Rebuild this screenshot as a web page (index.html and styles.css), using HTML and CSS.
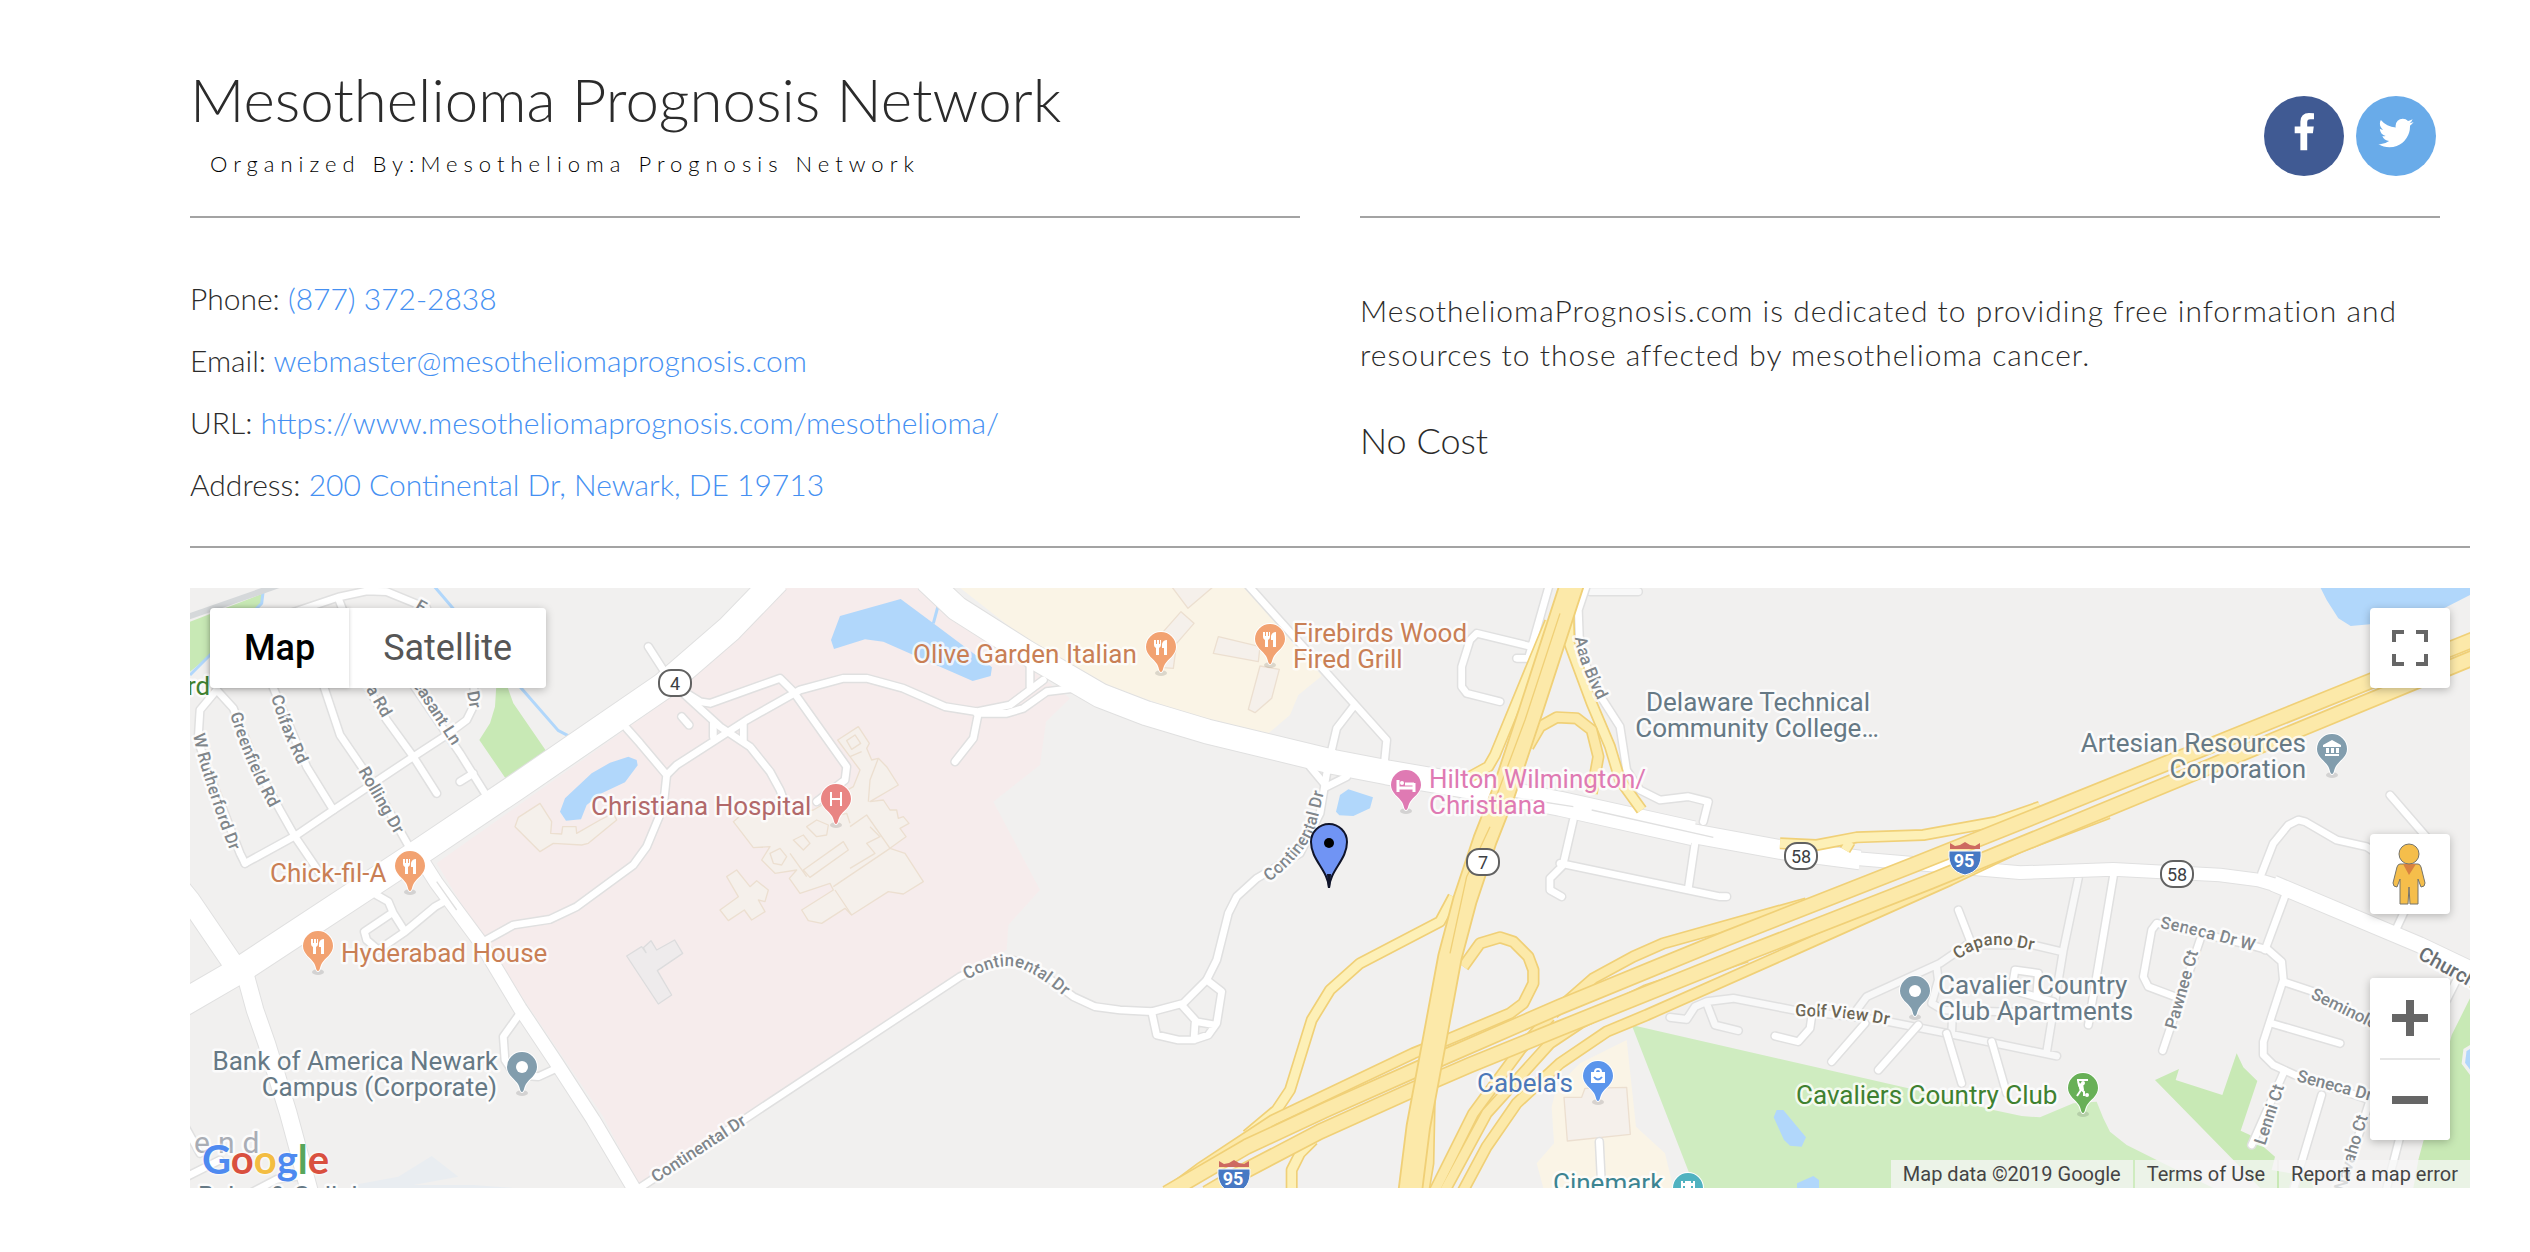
FILE: index.html
```html
<!DOCTYPE html>
<html lang="en">
<head>
<meta charset="utf-8">
<meta name="viewport" content="width=device-width, initial-scale=1">
<title>Mesothelioma Prognosis Network</title>
<link rel="stylesheet" href="styles.css">
</head>
<body>
<main class="page">
  <div class="columns">
    <header class="heading">
      <h1 class="title">Mesothelioma Prognosis Network</h1>
      <p class="organizer">Organized By:Mesothelioma Prognosis Network</p>
    </header>
    <nav class="social" aria-label="Social links">
      <a class="social-link facebook" href="#" aria-label="Facebook"><svg viewBox="0 0 1792 1792"><path d="M1343 12v264h-157q-86 0-116 36t-30 108v189h293l-39 296h-254v759h-306v-759h-255v-296h255v-218q0-186 104-288.5t277-102.5q147 0 228 12z"/></svg></a>
      <a class="social-link twitter" href="#" aria-label="Twitter"><svg viewBox="0 0 1792 1792"><path d="M1684 408q-67 98-162 167 1 14 1 42 0 130-38 259.5t-115.5 248.5-184.5 210.5-258 146-323 54.5q-271 0-496-145 35 4 78 4 225 0 401-138-105-2-188-64.5t-114-159.5q33 5 61 5 43 0 85-11-112-23-185.5-111.5t-73.5-205.5v-4q68 38 146 41-66-44-105-115t-39-154q0-88 44-163 121 149 294.5 238.5t371.5 99.5q-8-38-8-74 0-134 94.5-228.5t228.5-94.5q140 0 236 102 109-21 205-78-37 115-142 178 93-10 186-50z"/></svg></a>
    </nav>
    <ul class="contact">
      <li>Phone: <a href="tel:8773722838">(877) 372-2838</a></li>
      <li>Email: <a href="mailto:webmaster@mesotheliomaprognosis.com">webmaster@mesotheliomaprognosis.com</a></li>
      <li>URL: <a href="https://www.mesotheliomaprognosis.com/mesothelioma/">https://www.mesotheliomaprognosis.com/mesothelioma/</a></li>
      <li>Address: <a href="#map">200 Continental Dr, Newark, DE 19713</a></li>
    </ul>
    <section class="about">
      <p class="description">MesotheliomaPrognosis.com is dedicated to providing free information and resources to those affected by mesothelioma cancer.</p>
      <p class="cost">No Cost</p>
    </section>
  </div>
  <hr class="rule">
  <section class="map" id="map" aria-label="Map">
    <svg class="map-canvas" viewBox="190 588 2280 600">
      <defs>
        <g id="pin"><ellipse cx="0" cy="26" rx="6" ry="3" fill="#000" fill-opacity=".12"/><path d="M0 25C-2 25-2 20-4 17-7 12-15 8-15 0A15 15 0 0 1 15 0C15 8 7 12 4 17 2 20 2 25 0 25Z" stroke="#fff" stroke-width="2" paint-order="stroke"/></g>
        <g id="food"><use href="#pin"/><path fill="#fff" d="M-7-7h2v4h1v-4h2v4h1v-4h1v5q0 2-2 3v7h-3v-7q-2-1-2-3zM6-7v15H3V1H1v-4q1-4 5-4z"/></g>
        <g id="interstate"><path fill="#cd6a60" d="M-15-16l5 3 5-1 5-3 5 3 5 1 5-3v6h-30z"/><path fill="#4779c4" stroke="#fff" stroke-width="1" d="M-16-8h32c1 14-4 21-16 24C-12 13-17 6-16-8Z"/></g>
        <rect id="oval" x="-16" y="-13" width="32" height="26" rx="12" fill="#fff" stroke="#616161" stroke-width="2"/>

        <g id="streets">
          <path d="M195 850L350 765 460 690 700 530 800 465 860 420 885 370 880 300"/>
          <path d="M110 330L60 390 55 470 60 500 110 640 180 820 195 850"/>
          <path d="M110 330L160 385 230 560 300 690 345 770 420 880"/>
          <path d="M270 300L380 560 460 690M425 300L480 465 545 560 620 680 670 770 710 840M550 300L620 420 700 530 770 640"/>
          <path d="M690 300L840 520 915 640M840 605L880 580M330 100L480 50 560 33 620 35 740 84M475 55L500 120"/>
          <path d="M1405 200L1450 270M1340 445L1380 490 1460 585 1450 680 1400 800 1360 855 1190 980 1110 1018 1000 1035 910 1085"/>
          <path d="M1460 585L1490 555 1700 420 1860 330 1990 295 2060 295 2170 325 2295 380 2390 395 2490 375 2590 300"/>
          <path d="M2390 400L2480 400 2530 385 2600 335 2680 325M2395 400L2380 475 2325 545M2550 240V320"/>
          <path d="M1520 340L1560 365 1590 370 1800 295 1840 335 2000 560 1995 600 1910 665M1600 430L1600 470M1690 430L1690 480"/>
          <path d="M1510 340L1620 440 1710 500 1770 575 1800 630 1815 670M1505 410L1527 435"/>
          <path d="M3190 0L3620 480 3612 560M3520 380L3470 445 3450 530M3390 560L3440 620M3500 590L3440 620"/>
          <path d="M3440 580L3420 700 3360 820 3230 895 3170 950 3145 1000 3110 1140 3080 1200 3010 1270 2915 1295 2820 1290 2745 1280 2680 1250 2600 1190 2500 1140 2440 1145 2340 1190 1705 1610 1360 1836"/>
          <path d="M3080 1200L3125 1235 3110 1330 3085 1365 3040 1380 2995 1380 2930 1365 2915 1295M3005 1275L3050 1325 3105 1335M3045 1330L3042 1380"/>
          <path d="M4112 0L4045 235 4010 235M4055 200L3890 160 3870 180 3845 260 3845 320 3860 340 3960 365"/>
          <path d="M4225 0L4195 90 4198 170 4230 300 4320 440 4340 570 4380 630 4440 660 4525 650 4585 665 4570 725"/>
          <path d="M4180 720L4150 850M4140 850L4620 950 4640 950M4150 855L4110 895 4110 930 4145 950M4545 790L4525 925"/>
          <path d="M590 945L625 965 640 1000 675 1055 765 980 810 955M635 1000L553 1055 560 1080 595 1110 675 1055"/>
          <path d="M1020 1300L970 1370 975 1440 1005 1485 1075 1490 1130 1465M10 1630L60 1720M0 1800L120 1740M210 1840L290 1798 380 1785"/>
          <path d="M6245 880L6280 790 6325 735 6355 720 6375 725 6470 780 6560 800 6620 840M6630 645L6760 795M5800 890L5725 1335M6320 935L6255 1110"/>
          <path d="M5985 1250L5905 1220 5890 1190 5915 1050 5930 1030 6210 1095 6265 1110 6305 1145 6310 1200 6250 1385 6250 1425 6280 1455 6345 1485 6570 1560"/>
          <path d="M6060 1080L5948 1412M6310 1205L6400 1235 6600 1350M6275 1330L6480 1390M6310 1480L6215 1695M6425 1545L6340 1830M6570 1560L6480 1840M6680 980L6645 1055M6665 1650L6620 1824M6835 1190L6800 1260"/>
          <path d="M5335 990L5370 1080M4785 1368L4855 1385 4890 1345 4895 1310M5055 1330L4955 1445M5215 1335L5095 1470M5300 1360L5345 1510M5435 1385L5480 1540M4258 1685L4265 1824"/>
          <path d="M5570 1250L5575 1180 5505 1170 5495 1230 5620 1265"/>
        </g>
        <g id="lanes">
          <path d="M4470 1312L4520 1318 4545 1280 4580 1265 4660 1255 4840 1290 5100 1320 5300 1360 5630 1428M4580 1270L4605 1335 4675 1352M5030 1290L5060 1250 5280 1150 5360 1095 5560 1095 5645 1115M5270 1160L5275 1200 5255 1270 5290 1290 5600 1300M5315 1360L5318 1290M5695 895L5650 1110 5600 1415M4230 35H4375"/>
        </g>
        <g id="avenues">
          <path stroke-width="78" d="M-20 1286L180 1170 720 815 1010 620 1450 318 1650 145 1790 0"/>
          <path stroke-width="60" d="M0 925L30 962 175 1175"/>
          <path stroke-width="50" d="M195 1180L225 1290 260 1390 325 1600 390 1840"/>
          <path stroke-width="40" d="M700 800L770 910 900 1085 1020 1285 1130 1450 1240 1620 1370 1840"/>
          <path stroke-width="72" d="M2240 0L2330 85 2540 218 2760 346 2900 400 3080 454 3460 546 3620 577 3860 618 4140 671 4540 760"/>
          <path stroke-width="56" d="M4480 750L4810 810 5040 840"/>
          <path stroke-width="38" d="M4960 830L5200 850 5520 878 5800 868 6120 885 6235 900 6330 928"/>
          <path stroke-width="46" d="M6280 910L6720 1095 6920 1190"/>
        </g>
      </defs>
      <rect class="land" x="190" y="588" width="2280" height="600"/>
      <g transform="translate(180 580) scale(.333333)">
        <path fill="#f6ecec" d="M770 850L1440 375 1815 0 2215 24 2670 355 2598 425 2580 555 2440 665 2580 930 2485 1035 2480 1110 2340 1190 1380 1824 1270 1610 910 1080Z"/>
        <path fill="#faf4e6" d="M2310 0L2540 180 2760 310 3080 420 3265 460 3330 405 3355 345 3425 288 3200 0ZM4340 1380L4368 1640 4455 1720 4480 1824H4090L4070 1750 4122 1690 4115 1580 4130 1520 4200 1450Z"/>
        <path fill="#c8e9b5" d="M30 125L250 40 245 75 85 230 30 275ZM950 300H975L1000 370 1100 515 980 600 898 480 930 430 945 380ZM5925 1500L5997 1467 5987 1500 6127 1545 6170 1420 6190 1462 6232 1503 6182 1652 6210 1665 6285 1730 6275 1770 6390 1790 6400 1824H6240L6160 1740ZM6870 1255L6815 1365 6715 1740 6700 1824H6870Z"/>
        <path fill="#cfecc0" d="M4355 1335L5185 1525 5440 1590 5525 1608 5580 1612 5680 1570 5750 1565 5770 1615 5790 1655 5840 1695 5930 1740 6100 1824H4545Z"/>
        <path fill="#e9edf1" d="M1000 1824L880 1815 700 1815 835 1790 755 1728 655 1790 520 1815V1824Z"/>
        <path fill="#b1d7fb" d="M1980 108L2162 57 2260 130 2436 262 2432 288 2378 303 2275 258 2110 185 2055 178 1962 207 1953 180ZM1140 695L1155 655 1235 580 1290 548 1345 530 1370 540 1373 556 1335 607 1265 640 1220 675 1203 718 1158 722ZM3468 695L3480 645 3505 628 3579 652 3570 685 3520 708 3478 706ZM6422 24L6440 60 6475 115 6512 138 6570 133 6795 83 6870 45V24ZM4790 1590H4810L4878 1672 4865 1700 4830 1697 4812 1680 4781 1612ZM4851 1810L4900 1788 4917 1800V1824H4851Z"/>
        <path fill="#b1d7fb" stroke="#f1f1f0" stroke-width="10" d="M6880 1395L6855 1410 6850 1450 6880 1490Z"/>
        <g fill="none" stroke="#b1d7fb" stroke-width="9"><path d="M755 10L1020 320 1135 452 1170 470M250 30L245 70 90 225 30 285M2275 75L2260 130"/></g>
        <path d="M20 112L300 14" stroke="#d5d8da" stroke-width="18"/>
        <g fill="#f5f0eb" stroke="#ecdfd0" stroke-width="4" stroke-linejoin="round">
          <path d="M1015 712L1080 670 1115 725 1112 760 1145 762 1148 740 1188 740 1190 760 1260 720 1300 700 1310 720 1225 790 1205 795 1120 790 1080 815 1005 740Z"/>
          <path d="M1973 480L2035 440 2068 490 2060 505 2075 540 2095 535 2120 560 2155 615 2070 665 2110 660 2130 690 2150 690 2155 715 2170 710 2187 730 2160 745 2178 770 2130 805 2175 820 2230 905 2170 942 2125 935 2015 1005 1995 985 1925 1030 1885 1022 1865 990 1960 930 1950 910 1860 940 1828 895 1850 870 1785 880 1745 840 1770 800 1720 803 1660 725 1690 700 1800 705 1900 690 2020 620 2040 570 2010 530Z"/>
          <path fill="none" d="M2000 482L2025 465 2042 490 2015 508ZM1870 870L1990 785 2005 810 1890 892ZM1830 820L1880 890M2010 740L2060 705 2130 805 1960 920M2070 740L2100 770 2060 790 2085 820 2010 865M1880 740L1910 720 1945 735 1940 765 1910 770ZM1840 780L1870 765 1890 790 1870 810ZM1770 820L1800 805 1820 830 1805 855 1780 850ZM1960 710L2000 700 2010 730M2065 665L2070 600 2095 535M1965 930L2015 1005M2010 530L2045 515"/>
          <path d="M1640 890L1670 870 1710 920 1730 902 1765 930 1755 965 1735 960 1755 995 1715 1020 1693 990 1645 1022 1620 990 1675 950Z"/>
          <path d="M2960 0L3024 85 3100 20ZM2950 155L3003 95 3042 130 2990 190ZM2975 180L2990 190 2980 265 2940 262ZM3115 170L3240 200 3235 245 3100 220ZM3240 258L3298 268 3275 355 3225 398 3205 388ZM4152 1552L4205 1552 4215 1525 4340 1522 4351 1663 4162 1683Z"/>
          <path fill="#eeebec" stroke="#dcdcdd" d="M1340 1128L1385 1100 1398 1118 1390 1103 1413 1082 1430 1110 1484 1080 1508 1120 1432 1172 1475 1245 1435 1272Z"/>
        </g>
        <use class="street-case" href="#lanes"/><use class="lane-fill" href="#lanes"/>
        <use class="street-case" href="#streets"/>
        <g class="avenue-case">
          <path stroke-width="84" d="M-20 1286L180 1170 720 815 1010 620 1450 318 1650 145 1790 0"/>
          <path stroke-width="66" d="M0 925L30 962 175 1175"/>
          <path stroke-width="56" d="M195 1180L225 1290 260 1390 325 1600 390 1840"/>
          <path stroke-width="46" d="M700 800L770 910 900 1085 1020 1285 1130 1450 1240 1620 1370 1840"/>
          <path stroke-width="78" d="M2240 0L2330 85 2540 218 2760 346 2900 400 3080 454 3460 546 3620 577 3860 618 4140 671 4540 760"/>
          <path stroke-width="62" d="M4480 750L4810 810 5040 840"/>
          <path stroke-width="44" d="M4960 830L5200 850 5520 878 5800 868 6120 885 6235 900 6330 928"/>
          <path stroke-width="52" d="M6280 910L6720 1095 6920 1190"/>
        </g>
        <use class="street-fill" href="#streets"/>
        <use class="avenue-fill" href="#avenues"/>
        <path d="M4000 652L4180 680M4235 690L4600 772M770 905L830 990" fill="none" stroke="#e0e0e0" stroke-width="4"/>
        <g class="ramp-case" stroke-width="36">
          <path d="M4110 125L3945 525 3925 560 3870 590"/><path d="M4165 60L4168 190 4235 370 4290 500 4320 600 4385 690"/><path d="M5580 680L5450 725 5230 765 5030 772 4910 795 4800 790M5010 785L4995 810"/><path d="M3820 950L3780 1025 3540 1150 3450 1230 3395 1320 3330 1530 3290 1590 3200 1665"/><path d="M3400 1680L3360 1720 3335 1770 3335 1840"/>
        </g>
        <g class="ramp-fill" stroke-width="26">
          <path d="M4110 125L3945 525 3925 560 3870 590"/><path d="M4165 60L4168 190 4235 370 4290 500 4320 600 4385 690"/><path d="M5580 680L5450 725 5230 765 5030 772 4910 795 4800 790M5010 785L4995 810"/><path d="M3820 950L3780 1025 3540 1150 3450 1230 3395 1320 3330 1530 3290 1590 3200 1665"/><path d="M3400 1680L3360 1720 3335 1770 3335 1840"/>
        </g>
        <g class="ramp-case" stroke-width="37">
          <path d="M4045 500L4080 440 4130 412 4190 415 4235 450 4255 530 4235 640"/><path d="M3850 1160L3900 1090 3960 1072 4000 1085 4045 1130 4060 1170 4060 1210 4030 1270 3990 1300 3800 1380 3700 1420 3280 1620 3060 1765 2960 1840"/><path d="M4880 970L4450 1090 4360 1130 4240 1195 4120 1300"/><path d="M4110 1310L4020 1410 3880 1600 3760 1840"/><path d="M4700 1130L4400 1230 4200 1330 4110 1390 3920 1600 3790 1840"/><path d="M3750 1500L3745 1750 3730 1840"/><path d="M5785 700L5520 800 5310 900 4840 1110 4400 1305 4280 1355 4140 1450 4010 1570 3920 1700 3845 1840"/>
        </g>
        <g class="highway-fill" stroke-width="27">
          <path d="M4045 500L4080 440 4130 412 4190 415 4235 450 4255 530 4235 640"/><path d="M3850 1160L3900 1090 3960 1072 4000 1085 4045 1130 4060 1170 4060 1210 4030 1270 3990 1300 3800 1380 3700 1420 3280 1620 3060 1765 2960 1840"/><path d="M4880 970L4450 1090 4360 1130 4240 1195 4120 1300"/><path d="M4110 1310L4020 1410 3880 1600 3760 1840"/><path d="M4700 1130L4400 1230 4200 1330 4110 1390 3920 1600 3790 1840"/><path d="M3750 1500L3745 1750 3730 1840"/><path d="M5785 700L5520 800 5310 900 4840 1110 4400 1305 4280 1355 4140 1450 4010 1570 3920 1700 3845 1840"/>
        </g>
        <path class="ramp-case" stroke-width="50" d="M6900 225L5580 770 5250 905 4700 1120 4140 1345 3870 1455 3720 1520 3420 1655 3200 1770 3080 1840"/>
        <path class="highway-fill" stroke-width="40" d="M6900 225L5580 770 5250 905 4700 1120 4140 1345 3870 1455 3720 1520 3420 1655 3200 1770 3080 1840"/>
        <path class="ramp-case" stroke-width="50" d="M6900 171L5580 703 5200 855 4640 1075 4140 1280 3800 1428 3440 1588 3200 1700 2960 1840"/>
        <path class="highway-fill" stroke-width="40" d="M6900 171L5580 703 5200 855 4640 1075 4140 1280 3800 1428 3440 1588 3200 1700 2960 1840"/>
        <path class="ramp-case" stroke-width="76" d="M4180 0L4050 400 3970 640 3915 780 3855 960 3810 1130 3760 1400 3715 1640 3690 1840"/>
        <path class="highway-fill" stroke-width="65" d="M4180 0L4050 400 3970 640 3915 780 3855 960 3810 1130 3760 1400 3715 1640 3690 1840"/>
        <path d="M4140 100L4035 420 3945 660M3930 740L3860 890 3810 1120" class="ramp-case" stroke-width="4"/>
      </g>

      <g class="street-label">
        <path id="s1" fill="none" d="M193 735Q202 780 236 866"/><text><textPath href="#s1">W Rutherford Dr</textPath></text>
        <path id="s2" fill="none" d="M230 714Q246 768 280 826"/><text><textPath href="#s2">Greenfield Rd</textPath></text>
        <path id="s3" fill="none" d="M271 697Q282 735 308 784"/><text><textPath href="#s3">Colfax Rd</textPath></text>
        <text transform="translate(358 771) rotate(60)">Rolling Dr</text>
        <text transform="translate(361 681) rotate(60)">na Rd</text>
        <text transform="translate(412 684) rotate(57)">easant Ln</text>
        <text transform="translate(467 692) rotate(80)">Dr</text>
        <text transform="translate(414 609) rotate(30)">E</text>
        <text transform="translate(656 1183) rotate(-33)">Continental Dr</text>
        <path id="s4" fill="none" d="M967 980Q1003 958 1027 971 1045 979 1080 1010"/><text><textPath href="#s4">Continental Dr</textPath></text>
        <path id="s5" fill="none" d="M1269 882Q1307 853 1316 825 1322 800 1332 760"/><text><textPath href="#s5">Continental Dr</textPath></text>
        <path id="s6" fill="none" d="M1575 638Q1578 665 1607 718"/><text><textPath href="#s6">Aaa Blvd</textPath></text>
        <path id="s7" fill="none" d="M2160 928Q2195 934 2260 953"/><text><textPath href="#s7">Seneca Dr W</textPath></text>
        <text transform="translate(2176 1030) rotate(-74)">Pawnee Ct</text>
        <text transform="translate(2310 998) rotate(26)">Seminole Dr</text>
        <text transform="translate(2296 1081) rotate(15)">Seneca Dr</text>
        <text transform="translate(2265 1146) rotate(-72)">Lenni Ct</text>
        <text transform="translate(2345 1192) rotate(-73)">Navaho Ct</text>
        <g class="local">
          <path id="s8" fill="none" d="M1958 960Q1978 944 1998 945 2012 945 2050 954"/><text><textPath href="#s8">Capano Dr</textPath></text>
          <path id="s9" fill="none" d="M1795 1016L1830 1017Q1860 1019 1905 1028"/><text><textPath href="#s9">Golf View Dr</textPath></text>
        </g>
        <text class="wide" transform="translate(2417 958) rotate(29)">Church Rd</text>
      </g>

      <g class="place-label">
        <g class="food"><text x="270" y="882">Chick-fil-A</text><text x="913" y="663">Olive Garden Italian</text><text x="1293" y="642">Firebirds Wood</text><text x="1293" y="668">Fired Grill</text><text x="341" y="962">Hyderabad House</text></g>
        <text class="health" x="591" y="815">Christiana Hospital</text>
        <g class="lodging"><text x="1429" y="788">Hilton Wilmington/</text><text x="1429" y="814">Christiana</text></g>
        <g class="middle"><text x="1758" y="711">Delaware Technical</text><text x="1757" y="737">Community College…</text></g>
        <g class="end"><text x="2306" y="752">Artesian Resources</text><text x="2306" y="778">Corporation</text><text x="498" y="1070">Bank of America Newark</text><text x="497" y="1096">Campus (Corporate)</text></g>
        <text x="1938" y="994">Cavalier Country</text><text x="1938" y="1020">Club Apartments</text>
        <text class="shop" x="1477" y="1092">Cabela's</text>
        <text class="cinema" x="1553" y="1192">Cinemark</text>
        <text class="park" x="1796" y="1104">Cavaliers Country Club</text>
        <text class="park" x="187" y="695">rd</text>
        <text class="area" x="194" y="1153">end</text>
        <text x="198" y="1205">Baker &amp; Gallaher</text>
      </g>

      <g fill="#f2a271"><use href="#food" x="410" y="866"/><use href="#food" x="1161" y="647"/><use href="#food" x="1270" y="639"/><use href="#food" x="318" y="946"/></g>
      <g transform="translate(836 799)" fill="#e98583"><use href="#pin"/><path d="M-5-7V7M5-7V7M-5 0H5" stroke="#fff" stroke-width="2"/></g>
      <g transform="translate(1406 785)" fill="#df7ab3"><use href="#pin"/><path d="M-8-5V7M8-2V7M-8 3H8M-1-1H8" stroke="#fff" stroke-width="3"/><circle cx="-4" cy="-2" r="2" fill="#fff"/></g>
      <g transform="translate(2332 749)" fill="#829dad"><use href="#pin"/><path fill="#fff" d="M-9-4L0-9 9-4V-2H-9ZM-6-1h3v5h-3zM-1-1h3v5h-3zM4-1h3v5H4zM-7 5H7v2H-7z"/></g>
      <g fill="#829dad"><use href="#pin" x="522" y="1067"/><use href="#pin" x="1915" y="991"/></g>
      <circle cx="522" cy="1067" r="6" fill="#fff"/><circle cx="1915" cy="991" r="6" fill="#fff"/>
      <g transform="translate(1598 1076)" fill="#5b95ec"><use href="#pin"/><path fill="#fff" d="M-7-4H7V7H-7z"/><path d="M-3-4Q-3-7 0-7T3-4" fill="none" stroke="#fff" stroke-width="2"/><path d="M-4 1Q0 6 4 1" fill="none" stroke="#5b95ec" stroke-width="2"/></g>
      <g transform="translate(2083 1088)" fill="#68b057"><use href="#pin"/><path d="M-6-8H5M-5-7L-4-3 1-4M-4-3L-2 2-6 8M-2 1L1 4V8" fill="none" stroke="#fff" stroke-width="2"/><path fill="#fff" d="M-5-4L0-5 1 2-3 3Z"/><circle cx="0" cy="-5" r="2" fill="#fff"/><circle cx="4" cy="7" r="2" fill="#fff"/></g>
      <g transform="translate(1688 1188)" fill="#50b2c0"><use href="#pin"/><path fill="#fff" d="M-7-7h2v2h2v-2h6v2h2v-2h2V7H-7z"/><path d="M-5-2h2v3h-2zM3-2h2v3H3z"/></g>

      <g class="shield-label">
        <use href="#oval" x="675" y="683"/><text x="675" y="690">4</text>
        <use href="#oval" x="1483" y="862"/><text x="1483" y="869">7</text>
        <use href="#oval" x="1801" y="856"/><text x="1801" y="863">58</text>
        <use href="#oval" x="2177" y="874"/><text x="2177" y="881">58</text>
        <use href="#interstate" x="1965" y="859"/><text class="interstate" x="1964" y="867">95</text>
        <use href="#interstate" x="1234" y="1177"/><text class="interstate" x="1233" y="1185">95</text>
      </g>
      <path d="M1329 888C1328 870 1311 860 1311 842A18 18 0 0 1 1347 842C1347 860 1330 870 1329 888Z" fill="#7094f4" stroke="#10142a" stroke-width="2"/><path d="M1327 874H1331L1330 888H1328Z" fill="#10142a"/><circle cx="1329" cy="843" r="5" fill="#000"/>
    </svg>

    <div class="map-types">
      <button class="map-type active" type="button">Map</button><button class="map-type" type="button">Satellite</button>
    </div>
    <button class="control fullscreen" type="button" aria-label="Toggle fullscreen"><svg viewBox="0 0 80 80"><path d="M22 34V22H34V26H26V34ZM46 22H58V34H54V26H46ZM22 46H26V54H34V58H22ZM54 46H58V58H46V54H54Z"/></svg></button>
    <div class="control-stack">
      <button class="control" type="button" aria-label="Street View"><svg viewBox="0 0 80 80"><g fill="#f5be4b" stroke="#76746a" stroke-width="1"><path d="M30 30H48Q50 30 51 33L55 49Q55 53 51 53L48 45V70H40L39 53 38 70H30V45L27 53Q23 53 23 49L27 33Q28 30 30 30Z"/><path d="M33 30H46L39 41Z" fill="#d8813f" stroke="none"/><circle cx="39" cy="20" r="10"/></g></svg></button>
      <div class="zoom">
        <button class="zoom-button" type="button" aria-label="Zoom in"><svg viewBox="0 0 80 80"><path d="M36 22H44V36H58V44H44V58H36V44H22V36H36Z"/></svg></button>
        <button class="zoom-button" type="button" aria-label="Zoom out"><svg viewBox="0 0 80 80"><path d="M22 36H58V44H22Z"/></svg></button>
      </div>
    </div>
    <a class="google" href="#" aria-label="Google"><span class="blue">G</span><span class="red">o</span><span class="yellow">o</span><span class="blue">g</span><span class="green">l</span><span class="red">e</span></a>
    <footer class="credits"><span>Map data ©2019 Google</span><a href="#">Terms of Use</a><a href="#">Report a map error</a></footer>
  </section>
</main>
</body>
</html>
```
FILE: styles.css
```css
* { box-sizing: border-box; }
body { margin: 0; background: #fff; color: #2b2b2b; font-family: Lato, "Liberation Sans", sans-serif; font-weight: 300; }
h1, p, ul { margin: 0; padding: 0; }
a { color: #4590f2; text-decoration: none; }
button { border: 0; padding: 0; background: #fff; font-family: inherit; cursor: pointer; }

.page { padding: 63px 60px 64px 190px; }
.columns { display: grid; grid-template-columns: 37fr 36fr; column-gap: 60px; padding-right: 30px; }
.heading, .social { border-bottom: 2px solid #a3a3a3; }
.heading { padding-bottom: 39px; }
.title { font-size: 60px; line-height: 72px; font-weight: 300; }
.organizer { margin-top: 16px; padding-left: 20px; color: #000; font-size: 22px; line-height: 26px; letter-spacing: 6px; }

.social { display: flex; justify-content: flex-end; align-items: flex-end; gap: 12px; padding: 0 4px 40px 0; }
.social-link { display: flex; align-items: center; justify-content: center; width: 80px; height: 80px; padding-bottom: 6px; border-radius: 50%; }
.social-link svg { width: 40px; height: 40px; fill: #fff; }
.facebook { background: #405a93; }
.twitter { background: #69abe9; }

.contact { padding: 49px 0 31px; list-style: none; font-size: 30px; line-height: 62px; }
.about { padding-top: 70px; }
.description { font-size: 30px; line-height: 44px; letter-spacing: 1px; }
.cost { margin-top: 42px; font-size: 36px; line-height: 44px; }
.rule { height: 2px; margin: 0 0 40px; border: 0; background: #a3a3a3; }

.map { position: relative; overflow: hidden; font-family: Roboto, "Liberation Sans", sans-serif; font-weight: 400; }
.map-canvas { display: block; width: 100%; height: auto; }
.land { fill: #f1f0ef; }
.street-case, .street-fill, .lane-fill { fill: none; stroke-linecap: round; stroke-linejoin: round; }
.street-case { stroke: #e0e0e0; stroke-width: 29px; }
.street-fill { stroke: #fff; stroke-width: 20px; }
.lane-fill { stroke: #f8f8f8; stroke-width: 20px; }
.avenue-case, .avenue-fill, .ramp-case, .ramp-fill, .highway-fill { fill: none; stroke-linejoin: round; }
.avenue-case { stroke: #e0e0e0; }
.avenue-fill { stroke: #fff; }
.ramp-case { stroke: #f0d077; }
.ramp-fill { stroke: #fdf0b7; }
.highway-fill { stroke: #fce9a9; }

.street-label text, .place-label text { paint-order: stroke; stroke: #fff; stroke-opacity: .75; stroke-width: 5px; stroke-linejoin: round; }
.street-label { fill: #80868b; font-size: 17px; font-weight: 500; }
.street-label .local { fill: #6b6554; }
.street-label .wide { fill: #696e72; font-size: 20px; }
.place-label { fill: #667985; font-size: 26px; }
.place-label .food { fill: #c97f55; }
.place-label .health { fill: #b2696a; }
.place-label .lodging { fill: #df7ab3; }
.place-label .shop { fill: #4b78b9; }
.place-label .cinema { fill: #3c8492; }
.place-label .park { fill: #3f8130; }
.place-label .area { fill: #a9adb5; font-size: 30px; letter-spacing: 8px; }
.middle, .shield-label { text-anchor: middle; }
.end { text-anchor: end; }
.shield-label { fill: #3c4043; font-size: 18px; }
.shield-label .interstate { fill: #fff; font-weight: 700; }

.map-types { position: absolute; top: 20px; left: 20px; display: flex; border-radius: 4px; box-shadow: 0 2px 8px rgba(0, 0, 0, .25); }
.map-type { height: 80px; padding: 0 34px; border-radius: 0 4px 4px 0; color: #565656; font-size: 36px; line-height: 80px; }
.map-type.active { position: relative; border-radius: 4px 0 0 4px; box-shadow: 0 0 4px rgba(0, 0, 0, .2); color: #000; font-weight: 500; }
.control, .zoom { width: 80px; border-radius: 4px; background: #fff; box-shadow: 0 2px 8px rgba(0, 0, 0, .25); }
.control { display: block; height: 80px; }
.control svg, .zoom-button svg { display: block; width: 80px; height: 80px; fill: #666; }
.fullscreen { position: absolute; top: 20px; right: 20px; }
.control-stack { position: absolute; right: 20px; bottom: 48px; display: flex; flex-direction: column; gap: 64px; }
.zoom-button { display: block; width: 80px; border-radius: 4px; }
.zoom-button + .zoom-button::before { content: ""; display: block; height: 2px; margin: 0 10px; background: #e6e6e6; }

.google { position: absolute; left: 12px; bottom: 5px; font-family: Lato, "Liberation Sans", sans-serif; font-size: 40px; line-height: 48px; font-weight: 700; text-shadow: 0 0 3px #fff, 0 0 3px #fff; }
.blue { color: #4e8af0; }
.red { color: #d9503f; }
.yellow { color: #f3bd42; }
.green { color: #57a65c; }
.credits { position: absolute; right: 0; bottom: 0; display: flex; font-size: 20px; line-height: 28px; color: #444; }
.credits > * { padding: 0 12px; background: rgba(245, 245, 245, .75); color: #444; }
.credits > a { margin-left: 2px; }
```
